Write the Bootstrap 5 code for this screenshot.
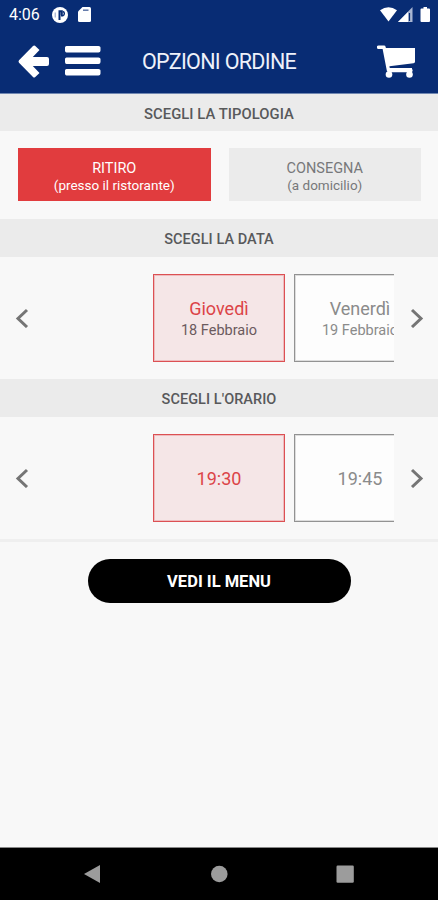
<!DOCTYPE html>
<html lang="it">
<head>
<meta charset="utf-8">
<meta name="viewport" content="width=device-width, initial-scale=1">
<title>Opzioni ordine</title>
<link href="https://cdn.jsdelivr.net/npm/bootstrap@5.3.0/dist/css/bootstrap.min.css" rel="stylesheet">
<style>
body{font-family:Roboto,"Liberation Sans",sans-serif;background:#f8f8f8;color:#58595b;height:900px;line-height:1}
.topbar{background:#082c74;height:94px;border-bottom:1px solid #7087b1}
.statusbar{height:29px;padding:0 8px 0 9px;font-size:16px}
.notif{margin-left:12px}
.sdcard{margin-left:10px}
.menu-icon{margin-left:16px}
.appbar{height:64px;padding:0 23px 0 18px}
.app-title{font-size:21.5px;letter-spacing:-.68px;margin:2px 0 0 41px;font-weight:400;color:#eef1fa;line-height:1}
.section-title{background:#ebebeb;height:38px;font-size:14.5px;letter-spacing:.05px;font-weight:500;line-height:41px;margin:0}
.section-title.first{height:37px;font-size:14.8px;line-height:40px}
.kinds{height:88px;padding:17px 17px 18px 18px;gap:18px}
.kind{border-radius:0;border:0;background:#ebebeb;color:#77787a;padding:4px 0 0;font-size:14.5px;line-height:17px}
.kind small{font-size:13.5px;display:block}
.kind.chosen{background:#e13c3e;color:#fff}
.picker{height:122px;padding:17px 14px 17px 15px;gap:15px}
.track{width:241px;margin-right:1px;height:88px;gap:9px}
.slot{width:132px;flex:none;border:1px solid #929292;box-shadow:inset 0 0 0 1px #ddd;background:#fdfdfd;color:#8b8b8b;font-size:18px;padding-top:2px}
.slot .day{font-size:14.5px;margin-top:6px}
.slot.chosen{border-color:#dc5053;box-shadow:inset 0 0 0 1px #eebcbe;background:#f5e6e7;color:#dc4448}
.slot.chosen .day{color:#6b5a5e}
.rule{height:3px;background:#efefef}
.go{width:263px;height:44px;background:#000;color:#fff;font-weight:700;font-size:16.5px;margin-top:17px;padding:3px 0 0}
.sysbar{height:53px;background:#000;border-top:1px solid #888}
</style>
</head>
<body class="d-flex flex-column overflow-hidden">
<header class="topbar text-white flex-shrink-0">
  <div class="statusbar d-flex align-items-center">
    <span class="clock">4:06</span>
    <svg class="notif" width="16" height="16" viewBox="0 0 16 16"><circle cx="8" cy="8" r="8" fill="#fff"/><path d="M7.500 13V4.300h2.300v4" fill="none" stroke="#082c74" stroke-width="2"/><path d="M11 4.500a2.300 2.300 0 0 1 0 4.200H9" fill="none" stroke="#082c74" stroke-width="1.400"/><path d="M3.200 5.500v5" stroke="#8d9dc2" stroke-width="1"/></svg>
    <svg class="sdcard" width="13" height="15" viewBox="0 0 13 15"><path d="M4.500 0H11.500Q13 0 13 1.500V13.500Q13 15 11.500 15H1.500Q0 15 0 13.500V4.500Z" fill="#fff"/><path d="M5 3.200h5.500" stroke="#5f77a8" stroke-width="1.500"/></svg>
    <svg class="ms-auto" width="50" height="16" viewBox="0 0 50 16"><path d="M0 3.200Q8.500-2.500 17 3.200L8.500 14.500Z" fill="#fff"/><path d="M32.500 0V15H18Z" fill="#a9b6d2"/><path d="M28 5V15H18Z" fill="#fff"/><path d="M29.500 6v8" stroke="#082c74" stroke-width="1.200"/><path d="M41.500 1.500h2V0h3.500v1.500h2q1 0 1 1V14q0 1-1 1h-7.500q-1 0-1-1V2.500q0-1 1-1Z" fill="#fff"/></svg>
  </div>
  <div class="appbar d-flex align-items-center">
    <svg width="31" height="33" viewBox="0 0 31 33"><path d="M17 0.800 21.500 5 14.800 12H29Q31 12 31 14V19Q31 21 29 21H14.800L21.500 28 17 32.200Q16 33 15 32L1 17.800Q0 16.500 1 15.200L15 1Q16 0 17 .800Z" fill="#fff"/></svg>
    <svg class="menu-icon" width="36" height="30" viewBox="0 0 36 30"><path d="M0 1.500Q0 0 1.500 0h32Q35.500 0 35.500 1.500v3q0 2-2 2h-32Q0 6.500 0 4.500ZM0 13q0-1.500 1.500-1.500h32q2 0 2 1.500v3q0 2-2 2h-32Q0 18 0 16ZM0 24.500Q0 23 1.500 23h32q2 0 2 1.500v3q0 2-2 2h-32Q0 29.500 0 27.500Z" fill="#fff"/></svg>
    <h1 class="app-title">OPZIONI ORDINE</h1>
    <svg class="ms-auto" width="38" height="33" viewBox="0 0 38 33"><path d="M1.500 2.200H7L11.500 25.500H34" fill="none" stroke="#fff" stroke-width="3.400" stroke-linecap="round" stroke-linejoin="round"/><path d="M7 3H38V16.500Q38 18 36.500 18.300L10.500 21.500Z" fill="#fff"/><path d="M11 23H35V26.500H11Z" fill="#fff"/><circle cx="12" cy="29.500" r="3.300" fill="#fff"/><circle cx="32.500" cy="29.500" r="3.300" fill="#fff"/></svg>
  </div>
</header>
<main class="flex-grow-1">
  <h2 class="section-title first text-center">SCEGLI LA TIPOLOGIA</h2>
  <div class="kinds d-flex">
    <button class="btn kind chosen flex-fill w-50">RITIRO<small>(presso il ristorante)</small></button>
    <button class="btn kind flex-fill w-50">CONSEGNA<small>(a domicilio)</small></button>
  </div>
  <h2 class="section-title text-center">SCEGLI LA DATA</h2>
  <div class="picker d-flex align-items-center">
    <svg width="14" height="20" viewBox="0 0 14 20"><path d="M12 2 3 10.500l9 8.500" fill="none" stroke="#757575" stroke-width="3"/></svg>
    <div class="track d-flex overflow-hidden ms-auto">
      <div class="slot chosen d-flex flex-column align-items-center justify-content-center"><span>Giovedì</span><span class="day">18 Febbraio</span></div>
      <div class="slot d-flex flex-column align-items-center justify-content-center"><span>Venerdì</span><span class="day">19 Febbraio</span></div>
    </div>
    <svg width="14" height="20" viewBox="0 0 14 20"><path d="M2 2 11 10.500l-9 8.500" fill="none" stroke="#757575" stroke-width="3"/></svg>
  </div>
  <h2 class="section-title text-center">SCEGLI L'ORARIO</h2>
  <div class="picker d-flex align-items-center">
    <svg width="14" height="20" viewBox="0 0 14 20"><path d="M12 2 3 10.500l9 8.500" fill="none" stroke="#757575" stroke-width="3"/></svg>
    <div class="track d-flex overflow-hidden ms-auto">
      <div class="slot chosen d-flex align-items-center justify-content-center"><span>19:30</span></div>
      <div class="slot d-flex align-items-center justify-content-center"><span>19:45</span></div>
    </div>
    <svg width="14" height="20" viewBox="0 0 14 20"><path d="M2 2 11 10.500l-9 8.500" fill="none" stroke="#757575" stroke-width="3"/></svg>
  </div>
  <div class="rule"></div>
  <button class="btn go rounded-pill d-block mx-auto">VEDI IL MENU</button>
</main>
<footer class="sysbar flex-shrink-0">
  <svg class="d-block" width="438" height="52" viewBox="0 0 438 52"><g fill="#9c9c9c"><path d="M84 26 100 17V35Z"/><circle cx="219.300" cy="26" r="8.300"/><rect x="336.500" y="17.500" width="17.300" height="17.300" rx="1.200"/></g></svg>
</footer>
<script src="https://cdn.jsdelivr.net/npm/bootstrap@5.3.0/dist/js/bootstrap.bundle.min.js"></script>
</body>
</html>
